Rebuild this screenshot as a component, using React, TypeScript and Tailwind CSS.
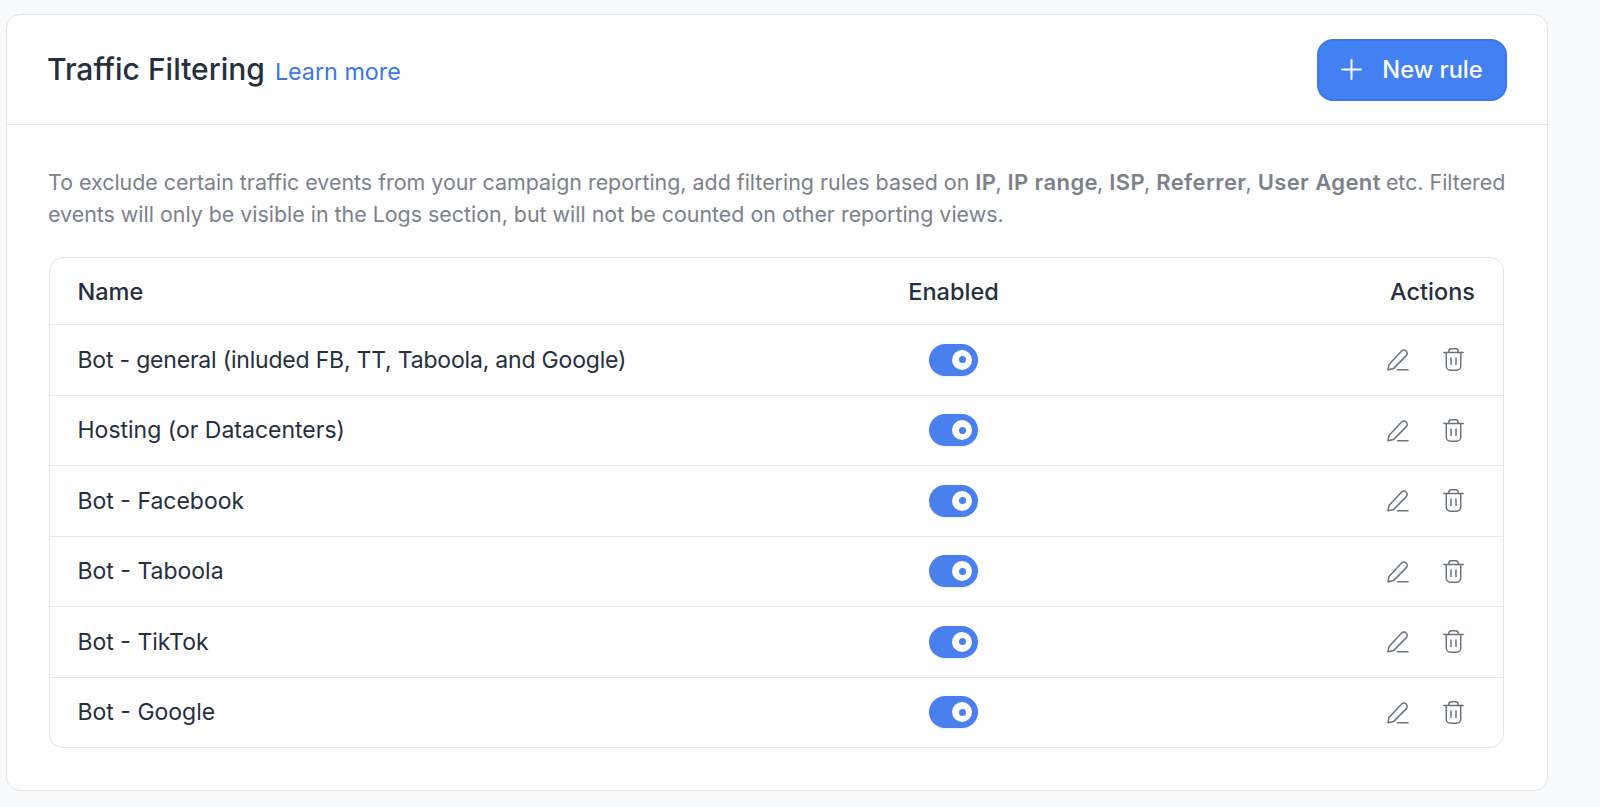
const rules = [
  "Bot - general (inluded FB, TT, Taboola, and Google)",
  "Hosting (or Datacenters)",
  "Bot - Facebook",
  "Bot - Taboola",
  "Bot - TikTok",
  "Bot - Google",
];

function PlusIcon() {
  return (
    <svg width="21" height="21" viewBox="0 0 21 21" fill="none" stroke="white" strokeWidth="2" strokeLinecap="round">
      <path d="M10.500 1v19M1 10.500h19" />
    </svg>
  );
}

function PenIcon() {
  return (
    <svg width="22" height="23" viewBox="0 0 22 23" fill="none" stroke="#6b7280" strokeWidth="1.5" strokeLinecap="round" strokeLinejoin="round">
      <path d="M1 21.700l1-5.200L14.600 3a3.100 3.100 0 0 1 4.500 0l.2.2a3.100 3.100 0 0 1 0 4.400L6.500 20.600 1 21.700z" />
      <path d="M10.500 21.800H21" />
    </svg>
  );
}

function TrashIcon() {
  return (
    <svg width="21" height="23" viewBox="0 0 21 23" fill="none" stroke="#6b7280" strokeWidth="1.5" strokeLinecap="round" strokeLinejoin="round">
      <path d="M0.800 4.500h19.400" />
      <path d="M5.800 4.500V3.500A2.700 2.700 0 0 1 8.500 0.800h4A2.700 2.700 0 0 1 15.200 3.500v1" />
      <path d="M3.300 4.500v13.700A4 4 0 0 0 7.300 22.200h6.400a4 4 0 0 0 4-4V4.500" />
      <path d="M8 10v6.500M13 10v6.500" />
    </svg>
  );
}

function Toggle() {
  return (
    <div className="flex h-[32px] w-[49px] items-center justify-end rounded-full bg-[#4a7fee] pr-[6px] shadow-[0_1px_2px_rgba(0,0,0,0.08)]">
      <div className="flex h-[20px] w-[20px] items-center justify-center rounded-full bg-white">
        <div className="h-[7px] w-[7px] rounded-full bg-[#4a7fee]" />
      </div>
    </div>
  );
}

function Strong({ children }: { children: string }) {
  return <b className="mr-[-1px] text-[22px] font-semibold tracking-[0.4px]">{children}</b>;
}

export default function App() {
  return (
    <div className="h-[807px] overflow-hidden bg-[#f9fafb] pl-[6px] pt-[14px] font-['Inter',sans-serif]">
      <div className="h-[777px] w-[1542px] rounded-[14px] border border-[#e2e4e8] bg-white">
        <div className="flex h-[110px] items-center justify-between border-b border-[#e2e4e8] pl-[40px] pr-[40px]">
          <div className="flex items-baseline gap-[10px]">
            <h1 className="text-[30px] font-medium text-[#262f3e]">Traffic Filtering</h1>
            <a className="text-[23.3px] text-[#3b78e7]">Learn more</a>
          </div>
          <button className="flex h-[62px] w-[190px] items-center justify-center gap-[20px] rounded-[16px] border-2 border-[#3b78f0] bg-[#4280f3] text-[23.6px] font-medium text-white">
            <PlusIcon />
            New rule
          </button>
        </div>
        <div className="pl-[42px] pt-[41px]">
          <p className="-ml-px w-[1464px] text-[21.4px] leading-[32px] text-[#7c818b]">
            To exclude certain traffic events from your campaign reporting, add filtering rules based on <Strong>IP</Strong>, <Strong>IP range</Strong>, <Strong>ISP</Strong>, <Strong>Referrer</Strong>, <Strong>User Agent</Strong> etc. Filtered events will only be visible in the Logs section, but will not be counted on other reporting views.
          </p>
          <div className="mt-[27px] w-[1455px] rounded-[14px] border border-[#e2e4e8] text-[23px] text-[#262f3e]">
            <div className="grid h-[66px] grid-cols-[816px_120px_1fr] items-center pl-[27.5px] pr-[28px] pt-[2px] text-[23.5px] font-medium">
              <div>Name</div>
              <div className="text-center">Enabled</div>
              <div className="text-right">Actions</div>
            </div>
            {rules.map((name) => (
              <div key={name} className="grid h-[70.5px] grid-cols-[816px_120px_1fr] items-center border-t border-[#e5e7eb] pl-[27.5px] pr-[28px]">
                <div className={name.length > 30 ? "tracking-[-0.2px]" : ""}>{name}</div>
                <div className="flex justify-center">
                  <Toggle />
                </div>
                <div className="flex items-center justify-end gap-[34px] pr-[11px]">
                  <PenIcon />
                  <TrashIcon />
                </div>
              </div>
            ))}
          </div>
        </div>
      </div>
    </div>
  );
}
